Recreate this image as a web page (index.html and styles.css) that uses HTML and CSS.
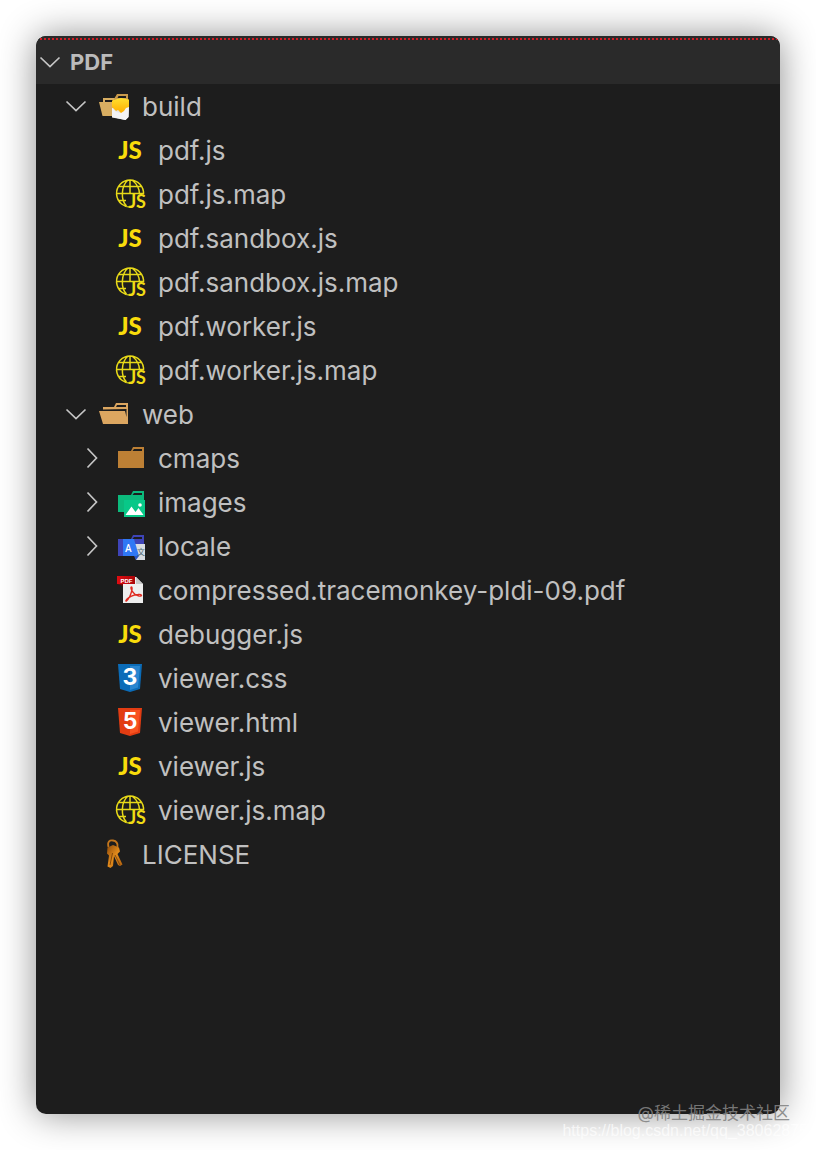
FILE: index.html
```
<!DOCTYPE html>
<html lang="en">
<head>
	<meta charset="UTF-8">
	<title>PDF</title>
	<link rel="stylesheet" href="styles.css">
</head>
<body>
	<!-- shared icon shapes -->
	<svg class="defs" aria-hidden="true">
		<defs>
			<linearGradient id="gold" x1="0" y1="0" x2="0" y2="1">
				<stop offset="0" stop-color="#ffe030"/>
				<stop offset="1" stop-color="#ffae00"/>
			</linearGradient>
			<linearGradient id="red" x1="0" y1="0" x2="1" y2="0">
				<stop offset="0" stop-color="#e00d12"/>
				<stop offset="1" stop-color="#a90408"/>
			</linearGradient>
			<linearGradient id="bronze" x1="0" y1="0" x2="1" y2="1">
				<stop offset="0" stop-color="#8f4a08"/>
				<stop offset="0.5" stop-color="#e28b1c"/>
				<stop offset="1" stop-color="#a85a0c"/>
			</linearGradient>
		</defs>
		<symbol id="chevron" viewBox="0 0 28 28">
			<path d="M9.5 4.5 18.5 14 9.5 23.5" fill="none" stroke="#c5c5c5" stroke-width="1.7"/>
		</symbol>
		<symbol id="globe" viewBox="0 0 32 32">
			<path d="M18 28.800A13.500 13.500 0 1 1 29.500 16.500M16 2v14M12.500 28C6.500 22 7 8 14 2M18 2c5 4 7.500 8 7.500 14M2.500 15.500H29M4.500 8.500h23M4.500 22.500H12" fill="none" stroke="#e8da18" stroke-width="1.5"/>
		</symbol>
	</svg>

	<main class="panel">
		<details class="section" open>
			<summary class="header"><svg class="chevron"><use href="#chevron"/></svg>PDF</summary>
			<ul class="tree">
				<li>
					<details open>
						<summary class="row">
							<svg class="chevron"><use href="#chevron"/></svg>
							<svg class="icon" viewBox="0 0 32 32">
								<path d="M5 12V8h12v4h2v14H4.500L1 12zM7 10v2h8v-2z" fill="#d8ae62" fill-rule="evenodd"/>
								<path d="M16 10V9l3-5h11v6zM20.500 6l-1 2H28V6z" fill="#c99a4c" fill-rule="evenodd"/>
								<path d="M14 18 31 15l-.500 12-3 3L14 27.500z" fill="#e6e6ea"/>
								<path d="m14 18 4 4 4 1 5-5 4-2-.500 11-3 3L14 27z" fill="#f4f4f6"/>
								<path d="M14 10.500 23 8l8 1.500V17l-3 1-2 3-3 2-3-3-2 1-4-4z" fill="url(#gold)"/>
							</svg>
							build
						</summary>
						<ul class="sub">
							<li><a class="row file" href="#"><span class="icon js">JS</span>pdf.js</a></li>
							<li><a class="row file" href="#"><span class="icon map"><svg><use href="#globe"/></svg><b>JS</b></span>pdf.js.map</a></li>
							<li><a class="row file" href="#"><span class="icon js">JS</span>pdf.sandbox.js</a></li>
							<li><a class="row file" href="#"><span class="icon map"><svg><use href="#globe"/></svg><b>JS</b></span>pdf.sandbox.js.map</a></li>
							<li><a class="row file" href="#"><span class="icon js">JS</span>pdf.worker.js</a></li>
							<li><a class="row file" href="#"><span class="icon map"><svg><use href="#globe"/></svg><b>JS</b></span>pdf.worker.js.map</a></li>
						</ul>
					</details>
				</li>
				<li>
					<details open>
						<summary class="row">
							<svg class="chevron"><use href="#chevron"/></svg>
							<svg class="icon" viewBox="0 0 32 32">
								<path d="M5 13V9h11l2-4h12v21H5L1 13zM19 7l-1 2h10V7zM5 11.500v1.500h22l1.500 6V11z" fill="#dca660" fill-rule="evenodd"/>
							</svg>
							web
						</summary>
						<ul class="sub">
							<li>
								<details>
									<summary class="row">
										<svg class="chevron"><use href="#chevron"/></svg>
										<svg class="icon" viewBox="0 0 32 32">
											<path d="M4 9h13l2-4h11v21H4zM20 7l-1.500 2H28V7z" fill="#bd8035" fill-rule="evenodd"/>
										</svg>
										cmaps
									</summary>
								</details>
							</li>
							<li>
								<details>
									<summary class="row">
										<svg class="chevron"><use href="#chevron"/></svg>
										<svg class="icon" viewBox="0 0 32 32">
											<path d="M4 9h13l2-4h11v21H4zM20 7l-1.500 2H28V7z" fill="#0cba7c" fill-rule="evenodd"/>
											<path d="M10 14h21v17H10z" fill="#08c888"/>
											<path d="m11.500 29 6-8.500 4 5.500 3-4L29.500 29z" fill="#fff"/>
											<circle cx="26" cy="19" r="1.800" fill="#fff"/>
										</svg>
										images
									</summary>
								</details>
							</li>
							<li>
								<details>
									<summary class="row">
										<svg class="chevron"><use href="#chevron"/></svg>
										<svg class="icon" viewBox="0 0 32 32">
											<path d="M4 9h13l2-4h11v21H4zM20 7l-1.500 2H28V7z" fill="#3e44b8" fill-rule="evenodd"/>
											<path d="M19 14h12v16H22z" fill="#d7dce2"/>
											<path d="M9 9h11l5 17H9z" fill="#2f78f5"/>
											<path d="M20 26h5l-3 4z" fill="#2854c5"/>
											<text x="11" y="22" font-family="Roboto, sans-serif" font-weight="500" font-size="10" fill="#fff">A</text>
											<text x="23" y="25" font-family="Noto Sans CJK SC, sans-serif" font-size="8" fill="#4a6670">文</text>
										</svg>
										locale
									</summary>
								</details>
							</li>
							<li>
								<a class="row file" href="#">
									<svg class="icon" viewBox="0 0 32 32">
										<path d="M9 3h13l7 7v19H9z" fill="#eee"/>
										<path d="m22 3 7 7h-7z" fill="#c8c8c8"/>
										<path d="M3 2h18v8H3z" fill="url(#red)"/>
										<path d="m3 10 6 2v-2z" fill="#7a0406"/>
										<path d="M17.500 13c-2 0 1.500 8 7.500 9 4 .500 3-2-1-1.500-5 .500-8.500 2-11.500 5-2 3 1 1.500 3-2.500 2-4 3.500-10 2-10z" fill="none" stroke="#e02a20" stroke-width="1.300"/>
										<text x="6.500" y="8.500" font-family="Liberation Sans, sans-serif" font-weight="700" font-size="6" fill="#fff">PDF</text>
									</svg>
									compressed.tracemonkey-pldi-09.pdf
								</a>
							</li>
							<li><a class="row file" href="#"><span class="icon js">JS</span>debugger.js</a></li>
							<li>
								<a class="row file" href="#">
									<svg class="icon" viewBox="0 0 32 32">
										<path d="M4 2h24l-2 25-10 3-10-3z" fill="#0b6cb8"/>
										<path d="M16 4h10l-2 21.500-8 2.500z" fill="#2a86d0"/>
										<text x="16" y="22.500" text-anchor="middle" font-family="Inter, sans-serif" font-weight="700" font-size="23" fill="#fff">3</text>
									</svg>
									viewer.css
								</a>
							</li>
							<li>
								<a class="row file" href="#">
									<svg class="icon" viewBox="0 0 32 32">
										<path d="M4 2h24l-2 25-10 3-10-3z" fill="#e23c12"/>
										<path d="M16 4h10l-2 21.500-8 2.500z" fill="#f85220"/>
										<text x="16" y="22.500" text-anchor="middle" font-family="Inter, sans-serif" font-weight="700" font-size="23" fill="#fff">5</text>
									</svg>
									viewer.html
								</a>
							</li>
							<li><a class="row file" href="#"><span class="icon js">JS</span>viewer.js</a></li>
							<li><a class="row file" href="#"><span class="icon map"><svg><use href="#globe"/></svg><b>JS</b></span>viewer.js.map</a></li>
						</ul>
					</details>
				</li>
				<li>
					<a class="row file" href="#">
						<svg class="icon" viewBox="-2 0 32 32">
							<path d="M8.500 9C7 3 10 2 13 2.500S18 5 17.500 9" fill="none" stroke="#c4761c" stroke-width="1.800"/>
							<path d="M7.500 9.500 13 7l6 2.500 1 4-2.500 2.500 5 10.500-2.500 1.500-2-1-4-9-1 10-2.500 2-3-1.500 1.500-11-2-2z" fill="url(#bronze)"/>
							<path d="m15 17 5 10M12.500 15l-2.500 12" stroke="#6e3806" stroke-width="0.800"/>
						</svg>
						LICENSE
					</a>
				</li>
			</ul>
		</details>
	</main>
	<div class="mark">@稀土掘金技术社区</div>
	<div class="mark-url">https://blog.csdn.net/qq_38062875</div>
</body>
</html>
```

FILE: styles.css
```
*{
	margin: 0;
	padding: 0;
	box-sizing: border-box;
}
body{
	min-height: 100vh;
	padding: 36px;
	position: relative;
	overflow: hidden;
	background: #fff;
	font-family: Inter, "Noto Sans CJK SC", sans-serif;
}
ul{
	list-style: none;
}
summary{
	list-style: none;
	cursor: pointer;
}
.defs{
	position: absolute;
	width: 0;
	height: 0;
}
.panel{
	min-height: calc(100vh - 72px);
	background: #1d1d1d;
	border-radius: 10px;
	overflow: hidden;
	box-shadow: 0 0 36px rgba(0,0,0,0.45);
}
/* section title */
.header{
	display: flex;
	align-items: center;
	gap: 6px;
	height: 48px;
	padding-top: 4px;
	background: repeating-linear-gradient(90deg, #d01c24 0 2px, #2a2a2a 2px 4px) 0 2px / 100% 2px no-repeat #2a2a2a;
	color: #bbb;
	font-size: 22px;
	font-weight: 700;
}
/* file tree */
.row{
	display: flex;
	align-items: center;
	height: 44px;
	padding-left: 26px;
	color: #c0c0c0;
	font-size: 26px;
	text-decoration: none;
	white-space: nowrap;
}
.file{
	padding-left: 62px;
}
.sub{
	padding-left: 16px;
}
.chevron{
	flex: none;
	width: 28px;
	height: 28px;
}
details[open] > summary > .chevron{
	transform: rotate(90deg);
}
.row .chevron{
	margin-right: 8px;
}
.icon{
	flex: none;
	width: 32px;
	height: 32px;
	margin-right: 12px;
}
.js{
	color: #f9dc0b;
	font-family: Lato, sans-serif;
	font-size: 24px;
	font-weight: 900;
	line-height: 32px;
	text-align: center;
}
.map{
	position: relative;
}
.map svg{
	display: block;
	width: 32px;
	height: 32px;
}
.map b{
	position: absolute;
	right: 0;
	bottom: 0;
	color: #f0dc14;
	font-family: Lato, sans-serif;
	font-size: 18px;
	font-weight: 700;
	line-height: 18px;
}
/* watermarks over the bottom edge */
.mark{
	position: absolute;
	right: 26px;
	bottom: 24px;
	color: rgba(130,130,130,0.9);
	font-size: 17px;
	line-height: 26px;
}
.mark-url{
	position: absolute;
	right: 8px;
	bottom: 8px;
	color: rgba(255,255,255,0.7);
	font-family: "Liberation Sans", sans-serif;
	font-size: 16px;
	line-height: 22px;
}
```
